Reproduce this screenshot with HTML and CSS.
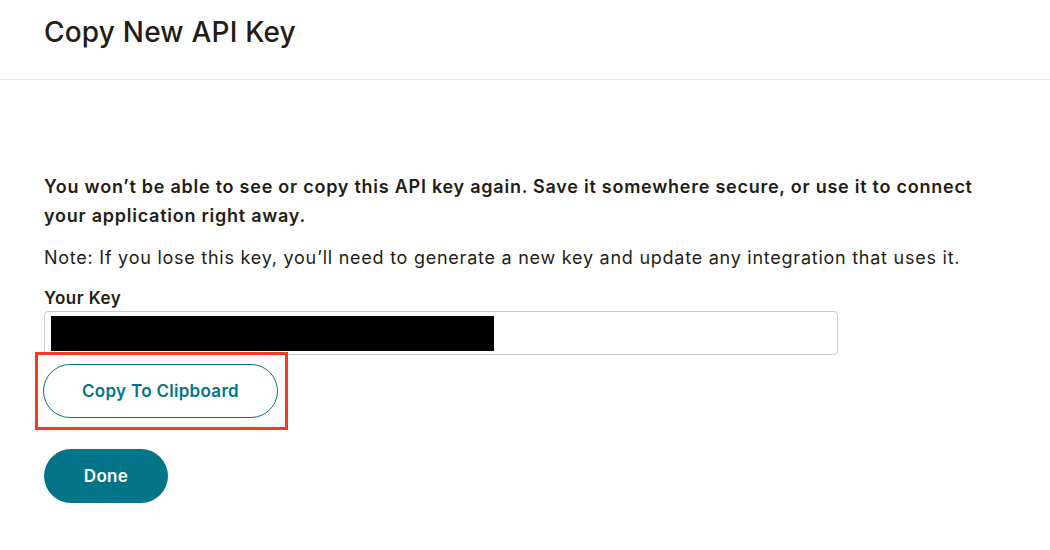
FILE: index.html
```html
<!DOCTYPE html>
<html>
<head>
<meta charset="utf-8">
<link rel="stylesheet" href="styles.css">
</head>
<body>
<header class="header">
  <h1 class="title">Copy New API Key</h1>
</header>
<main class="content">
  <p class="warning">You won’t be able to see or copy this API key again. Save it somewhere secure, or use it to connect your application right away.</p>
  <p class="note">Note: If you lose this key, you’ll need to generate a new key and update any integration that uses it.</p>
  <label class="label">Your Key</label>
  <div class="key-input"><span class="redacted"></span></div>
  <div class="highlight">
    <button class="btn btn-outline">Copy To Clipboard</button>
  </div>
  <button class="btn btn-primary">Done</button>
</main>
</body>
</html>
```
FILE: styles.css
```css
html, body {
  margin: 0;
  padding: 0;
  background: #ffffff;
}
body {
  font-family: "Inter", "Liberation Sans", sans-serif;
  color: #241c15;
}
.header {
  height: 80px;
  border-bottom: 1px solid #e6e9ed;
  padding: 0 44px;
  box-sizing: border-box;
}
.title {
  margin: 0;
  padding-top: 14px;
  font-size: 28px;
  font-weight: 500;
  letter-spacing: 0.2px;
  line-height: 36px;
}
.content {
  padding: 92px 44px 0 44px;
}
.warning {
  margin: 0;
  font-size: 18px;
  font-weight: 600;
  line-height: 29px;
  letter-spacing: 0.75px;
  max-width: 960px;
}
.note {
  margin: 16px 0 0 0;
  font-size: 18px;
  font-weight: 400;
  line-height: 24px;
  letter-spacing: 0.75px;
}
.label {
  display: block;
  margin-top: 16px;
  font-size: 17px;
  font-weight: 600;
  letter-spacing: 0.5px;
  line-height: 24px;
}
.key-input {
  margin-top: 1px;
  width: 794px;
  height: 44px;
  box-sizing: border-box;
  border: 1px solid #c5ccd4;
  border-radius: 4px;
  padding: 4px 6px;
}
.redacted {
  display: block;
  width: 443px;
  height: 35px;
  background: #000;
}
.highlight {
  margin-left: -9px;
  width: 253px;
  height: 78px;
  box-sizing: border-box;
  border: 3px solid #f33b24;
  padding: 9px 0 0 5px;
  margin-top: -3px;
}
.btn {
  font-family: inherit;
  font-size: 17px;
  font-weight: 600;
  letter-spacing: 0.3px;
  border-radius: 999px;
  height: 54px;
  cursor: pointer;
}
.btn-outline {
  width: 235px;
  background: #fff;
  border: 1px solid #027589;
  color: #027589;
}
.btn-primary {
  margin-top: 19px;
  width: 124px;
  background: #027589;
  border: none;
  color: #fff;
}
```
